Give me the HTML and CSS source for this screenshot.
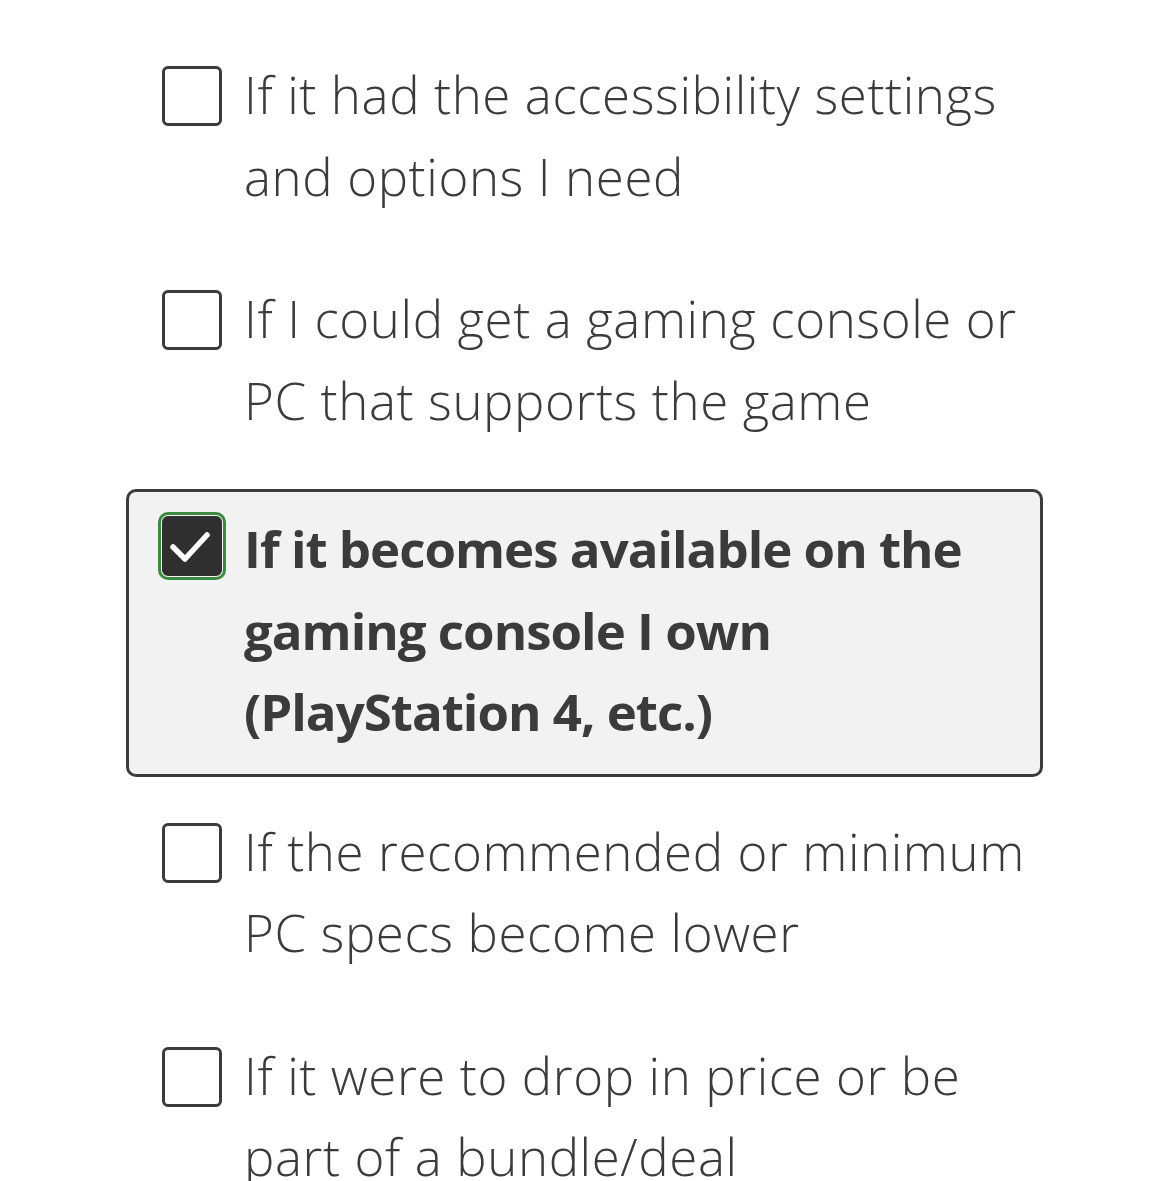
FILE: index.html
```html
<!DOCTYPE html>
<html lang="en">
<head>
<meta charset="utf-8">
<title>Survey options</title>
<link rel="stylesheet" href="styles.css">
</head>
<body>
<div class="options">
  <label class="option">
    <span class="box"></span>
    <span class="text">If it had the accessibility settings and options I need</span>
  </label>
  <label class="option">
    <span class="box"></span>
    <span class="text">If I could get a gaming console or PC that supports the game</span>
  </label>
  <label class="option selected">
    <span class="box checked">
      <svg viewBox="0 0 58 58" width="58" height="58"><polyline points="11,31 23,43 45,19" fill="none" stroke="#ffffff" stroke-width="5.5" stroke-linecap="round" stroke-linejoin="round"/></svg>
    </span>
    <span class="text">If it becomes available on the gaming console I own (PlayStation 4, etc.)</span>
  </label>
  <label class="option">
    <span class="box"></span>
    <span class="text">If the recommended or minimum PC specs become lower</span>
  </label>
  <label class="option">
    <span class="box"></span>
    <span class="text">If it were to drop in price or be part of a bundle/deal</span>
  </label>
</div>
</body>
</html>
```
FILE: styles.css
```css
html, body {
  margin: 0;
  padding: 0;
  background: #ffffff;
}
body {
  font-family: "Open Sans", Roboto, sans-serif;
  color: #3b3b3b;
  overflow: hidden;
  height: 1181px;
}
.options {
  margin-left: 126px;
  width: 917px;
  padding-top: 35px;
  display: flex;
  flex-direction: column;
  gap: 18px;
}
.option {
  display: flex;
  align-items: flex-start;
  gap: 22px;
  padding: 16px 0 21px 33px;
  border: 3px solid transparent;
  border-radius: 10px;
}
.option.selected {
  border-color: #3c3c3c;
  background: #f2f2f2;
  margin: 6px 0 -3px;
}
.box {
  flex: none;
  width: 54px;
  height: 54px;
  margin-top: 12px;
  border: 3px solid #3b3b3b;
  border-radius: 6px;
  background: #ffffff;
  position: relative;
}
.box.checked {
  margin-top: 8px;
  background: #2f2f2f;
  border-color: #2f2f2f;
  box-shadow: 0 0 0 1px #f2f2f2, 0 0 0 4px #3b8a3f;
}
.box svg {
  position: absolute;
  left: -3px;
  top: -3px;
}
.text {
  font-size: 51px;
  font-weight: 300;
  line-height: 81.5px;
  letter-spacing: 0.6px;
}
.selected .text {
  font-weight: 700;
  letter-spacing: -1px;
}
```
